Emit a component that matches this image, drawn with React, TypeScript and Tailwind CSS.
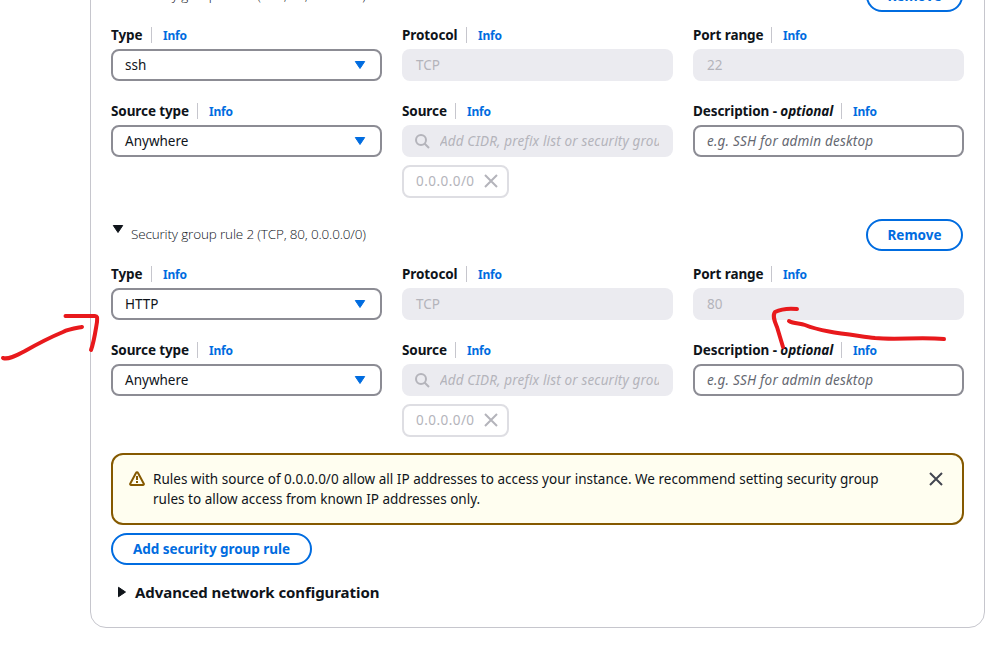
import type { ReactNode } from "react";

function Caret({ className }: { className: string }) {
  return (
    <svg width="12" height="10" viewBox="0 0 12 10" className={className}>
      <path d="M1.3 1.5h9.4L6 8.5z" fill="currentColor" stroke="currentColor" strokeWidth="1" strokeLinejoin="round" />
    </svg>
  );
}

function Cross({ className }: { className: string }) {
  return (
    <svg width="16" height="16" viewBox="0 0 16 16" className={className}>
      <path d="m2 2 12 12M14 2 2 14" stroke="currentColor" strokeWidth="2" fill="none" />
    </svg>
  );
}

function Label({ children, width }: { children: ReactNode; width: string }) {
  return (
    <div className="mb-1 flex h-5 items-center whitespace-nowrap">
      <span className={`text-[13.5px] font-bold leading-5 tracking-[-0.1px] ${width}`}>{children}</span>
      <span className="ml-2 h-4 w-px bg-[#c6c6cd]" />
      <span className="ml-[11px] pt-px text-[12px] font-bold leading-5 tracking-[-0.2px] text-[#006ce0]">Info</span>
    </div>
  );
}

function SelectBox({ children }: { children: ReactNode }) {
  return (
    <div className="flex h-8 items-center justify-between rounded-lg border-2 border-[#8c8c94] bg-white pl-3 pr-3.5">
      <span>{children}</span>
      <Caret className="text-[#006ce0]" />
    </div>
  );
}

function Disabled({ children }: { children: ReactNode }) {
  return <div className="flex h-8 items-center rounded-lg bg-[#ebebf0] px-3.5 text-[#b4b4bb]">{children}</div>;
}

function Rule({ title, type, port }: { title: string; type: string; port: string }) {
  return (
    <section>
      <div className="mb-[13px] flex h-8 justify-between">
        <div className="flex pl-px">
          <Caret className="mt-[5px] text-[#0f141a]" />
          <span className="ml-[7px] mt-1 pt-px font-['Open_Sans'] text-[13.5px] font-light leading-5 tracking-[-0.16px]">{title}</span>
        </div>
        <button className="mr-px flex h-8 w-[97px] items-center justify-center rounded-full border-2 border-[#006ce0] text-[13.5px] font-bold text-[#006ce0]">
          Remove
        </button>
      </div>
      <div className="grid grid-cols-3 gap-x-5 gap-y-5">
        <div>
          <Label width="w-8">Type</Label>
          <SelectBox>{type}</SelectBox>
        </div>
        <div>
          <Label width="w-14">Protocol</Label>
          <Disabled>TCP</Disabled>
        </div>
        <div>
          <Label width="w-[70px]">Port range</Label>
          <Disabled>{port}</Disabled>
        </div>
        <div>
          <Label width="w-[78px]">Source type</Label>
          <SelectBox>Anywhere</SelectBox>
        </div>
        <div>
          <Label width="w-[45px]">Source</Label>
          <Disabled>
            <svg width="16" height="16" viewBox="0 0 16 16" className="-ml-0.5 mr-2.5 shrink-0" fill="none" stroke="currentColor" strokeWidth="2">
              <circle cx="7" cy="7" r="5" />
              <path d="m10.5 10.5 4.5 4.5" />
            </svg>
            <span className="w-[219px] overflow-hidden whitespace-nowrap italic tracking-[0.16px]">Add CIDR, prefix list or security group ID</span>
          </Disabled>
          <div className="mt-2 flex h-[33px] w-[107px] items-center justify-between rounded-lg border-2 border-[#dedee3] pl-3 pr-2 text-[#b4b4bb]">
            <span className="pb-0.5 tracking-[0.45px]">0.0.0.0/0</span>
            <Cross className="-mt-px" />
          </div>
        </div>
        <div>
          <Label width="w-[140px]">
            Description - <i>optional</i>
          </Label>
          <div className="flex h-8 items-center rounded-lg border-2 border-[#8c8c94] px-3 italic tracking-[0.2px] text-[#656871]">
            e.g. SSH for admin desktop
          </div>
        </div>
      </div>
    </section>
  );
}

export default function App() {
  return (
    <div className="relative h-[646px] w-[998px] overflow-hidden bg-white font-['Noto_Sans',sans-serif] text-[13.5px] leading-5 tracking-[0.01px] text-[#0f141a]">
      <main className="-mt-10 ml-[90px] h-[668px] w-[895px] rounded-2xl border border-[#c6c6cd] pl-5 pr-5 pt-[19px]">
        <Rule title="Security group rule 1 (TCP, 22, 0.0.0.0/0)" type="ssh" port="22" />
        <div className="h-[21px]" />
        <Rule title="Security group rule 2 (TCP, 80, 0.0.0.0/0)" type="HTTP" port="80" />
        <div className="mt-4 flex h-[72px] rounded-xl border-2 border-[#855900] bg-[#fffef0] pl-4 pr-[18px] pt-3.5">
          <svg width="16" height="16" viewBox="0 0 16 16" className="mt-0.5 shrink-0 text-[#855900]" fill="none" stroke="currentColor" strokeWidth="2" strokeLinejoin="round">
            <path d="M7.1 1.8a1 1 0 0 1 1.8 0l5.9 10.9a.9.9 0 0 1-.8 1.3H2a.9.9 0 0 1-.8-1.3z" />
            <path d="M8 5v4M8 10v2" />
          </svg>
          <p className="ml-2 w-[740px] whitespace-nowrap">
            Rules with source of 0.0.0.0/0 allow all IP addresses to access your instance. We recommend setting security group
            <br />
            rules to allow access from known IP addresses only.
          </p>
          <Cross className="ml-auto mt-0.5 text-[#424650]" />
        </div>
        <button className="mt-2 flex h-8 w-[201px] items-center justify-center rounded-full border-2 border-[#006ce0] text-[13.5px] font-bold tracking-[-0.05px] text-[#006ce0]">
          Add security group rule
        </button>
        <div className="mt-[15px] flex h-6 items-center pl-1.5">
          <svg width="10" height="12" viewBox="0 0 10 12" className="text-[#0f141a]">
            <path d="M1.5 1.3v9.4L8.5 6z" fill="currentColor" stroke="currentColor" strokeLinejoin="round" />
          </svg>
          <span className="ml-2 text-[15px] font-bold leading-6 tracking-[-0.07px]">Advanced network configuration</span>
        </div>
      </main>
      <svg width="998" height="646" viewBox="0 0 998 646" className="pointer-events-none absolute left-0 top-0" fill="none" stroke="#e8191c" strokeWidth="4" strokeLinecap="round" strokeLinejoin="round">
        <path d="M3 358C9 360 17 355 25 351C39 343 51 337 63 332C69 329 77 328 82 327M65.500 316L95 316C98 316 97 319 97 322C95 334 94 342 91 350" />
        <path d="M797 309C787 308 779 310 775 312C772 316 775 322 777 327L783 347M789 321C794 324 800 323 805 325C822 332 846 334 875 338C895 340 920 337 944 339" />
      </svg>
    </div>
  );
}
